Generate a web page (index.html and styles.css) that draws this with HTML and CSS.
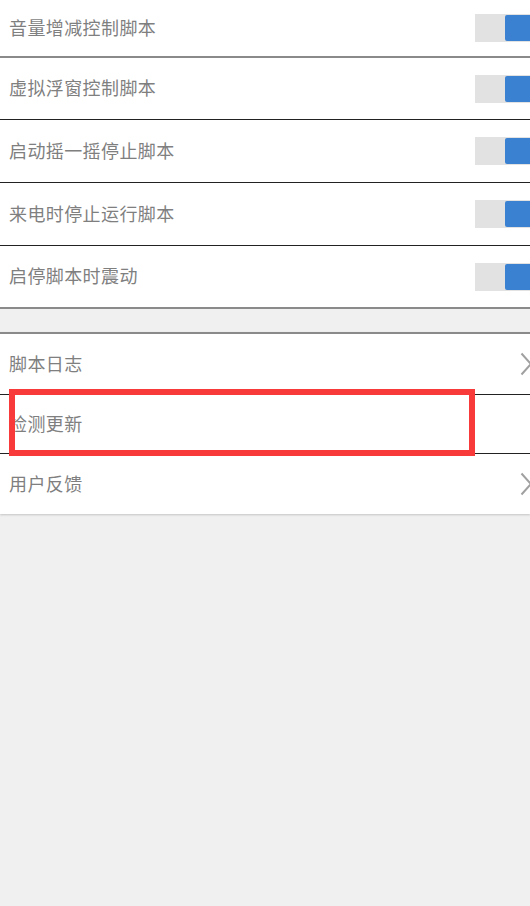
FILE: index.html
```html
<!DOCTYPE html>
<html lang="zh-CN">
<head>
<meta charset="utf-8">
<link rel="stylesheet" href="styles.css">
</head>
<body>
<div class="page">
  <section class="group group-top">
    <div class="row row-first"><span class="label">音量增减控制脚本</span><span class="switch"><span class="on"></span></span></div>
    <div class="row h62"><span class="label">虚拟浮窗控制脚本</span><span class="switch"><span class="on"></span></span></div>
    <div class="row h63"><span class="label">启动摇一摇停止脚本</span><span class="switch"><span class="on"></span></span></div>
    <div class="row h63"><span class="label">来电时停止运行脚本</span><span class="switch"><span class="on"></span></span></div>
    <div class="row row-last h61"><span class="label">启停脚本时震动</span><span class="switch"><span class="on"></span></span></div>
  </section>
  <div class="spacer"></div>
  <section class="group group-bottom">
    <div class="row h61"><span class="label">脚本日志</span><svg class="chev" width="12" height="24" viewBox="0 0 12 24"><polyline points="1.5,1.5 11,12 1.5,22.5" fill="none" stroke="#a0a0a0" stroke-width="2"/></svg></div>
    <div class="row h59"><span class="label">检测更新</span></div>
    <div class="row row-last h60"><span class="label">用户反馈</span><svg class="chev" width="12" height="24" viewBox="0 0 12 24"><polyline points="1.5,1.5 11,12 1.5,22.5" fill="none" stroke="#a0a0a0" stroke-width="2"/></svg></div>
    <div class="highlight"></div>
  </section>
</div>
</body>
</html>
```
FILE: styles.css
```css
* { box-sizing: border-box; }
html, body {
  margin: 0;
  padding: 0;
  background: #f0f0f0;
}
body {
  width: 530px;
  height: 906px;
  overflow: hidden;
  font-family: "Noto Sans CJK SC", "Noto Sans", sans-serif;
}
.page {
  display: flex;
  flex-direction: column;
}
.group {
  background: #ffffff;
  display: flex;
  flex-direction: column;
}
.group-top {
  border-bottom: 2px solid #8a8a8a;
}
.group-bottom {
  position: relative;
  border-top: 2px solid #8a8a8a;
  box-shadow: 0 1px 2px rgba(0, 0, 0, 0.18);
}
.spacer {
  height: 23px;
  background: #f0f0f0;
}
.row {
  display: flex;
  align-items: center;
  justify-content: space-between;
  padding-left: 9px;
  border-bottom: 1px solid #222222;
  overflow: hidden;
}
.h59 { height: 59px; }
.h60 { height: 60px; }
.h61 { height: 61px; }
.h62 { height: 62px; }
.h63 { height: 63px; }
.row-first {
  height: 58px;
  border-bottom: 2px solid #8a8a8a;
}
.row-last {
  border-bottom: none;
}
.label {
  font-size: 18px;
  color: #7f7f7f;
  letter-spacing: 0.4px;
  line-height: 1;
  margin-bottom: 3px;
}
.switch {
  display: flex;
  width: 55px;
  height: 28px;
  background: #e2e2e2;
  padding: 1px 0 1px 30px;
}
.switch .on {
  flex: 1;
  background: #3a81d1;
  border-radius: 2px 0 0 2px;
}
.chev {
  margin-right: -2px;
  display: block;
}
.highlight {
  position: absolute;
  left: 9px;
  top: 55px;
  width: 466px;
  height: 67px;
  border: 6px solid #f83a3b;
}
```
